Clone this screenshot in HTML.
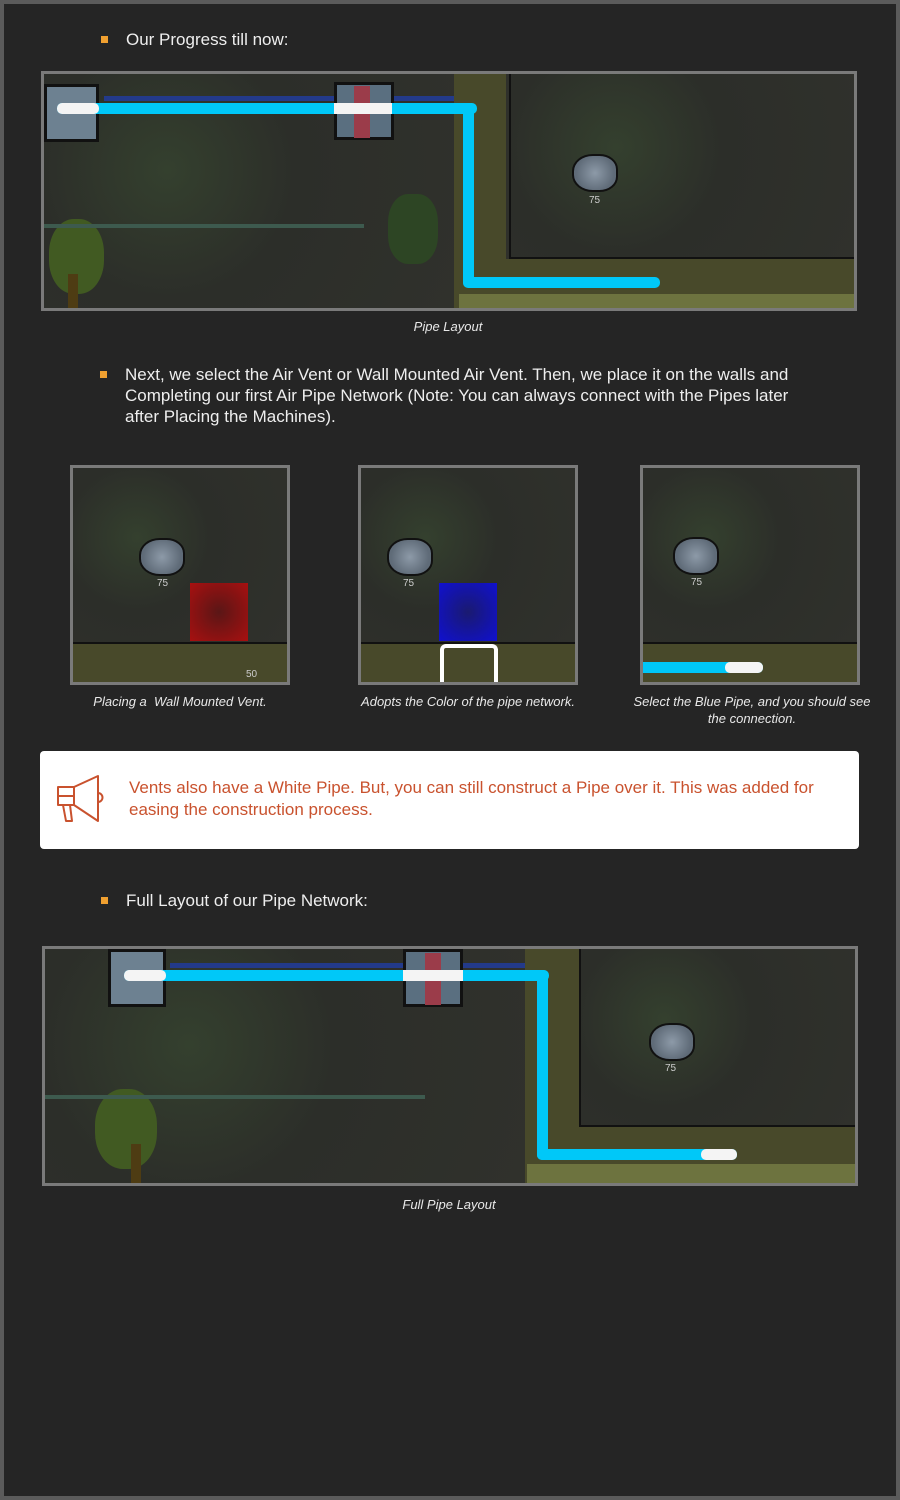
<!DOCTYPE html>
<html><head><meta charset="utf-8"><style>
*{margin:0;padding:0;box-sizing:border-box}
html,body{width:900px;height:1500px;background:#5b5b5b;overflow:hidden}
#page{position:absolute;left:4px;top:4px;width:892px;height:1492px;background:#252525}
.abs{position:absolute}
.t{position:absolute;color:#eeeeee;font-family:"Liberation Sans",sans-serif;font-size:17px;line-height:21px}
.b{position:absolute;width:7px;height:7px;background:#f0a030}
.cap{position:absolute;color:#e8e8e8;font-family:"Liberation Sans",sans-serif;font-size:13px;font-style:italic;text-align:center;line-height:17px}
.img{position:absolute;border:3px solid #7a7a7a;background:#2f302b;overflow:hidden}
.g{position:absolute;background:radial-gradient(circle at 30% 40%,#34402e 0,#2c2e29 40%,#30312c 100%)}
.pipe{position:absolute;background:#00c8f8;border-radius:5px}
.wp{position:absolute;background:#f4f4f4;border-radius:5px}
.rock{position:absolute;width:46px;height:38px;background:radial-gradient(circle,#8d9aa8 0,#5f6b78 70%);border:2px solid #111;border-radius:45% 40% 40% 45%}
.n{position:absolute;color:#ccc;font-family:"Liberation Sans",sans-serif;font-size:10px}
</style></head><body><div id="page"></div>

<div class="b" style="left:101px;top:36px"></div>
<div class="t" style="left:126px;top:29px">Our Progress till now:</div>

<div class="img" style="left:41px;top:71px;width:816px;height:240px">
  <div class="g" style="left:0;top:0;width:410px;height:240px"></div>
  <div class="abs" style="left:410px;top:0;width:52px;height:240px;background:#48492a"></div>
  <div class="abs" style="left:410px;top:185px;width:403px;height:55px;background:#48492a"></div>
  <div class="abs" style="left:415px;top:220px;width:400px;height:20px;background:#6d733f"></div>
  <div class="g" style="left:465px;top:0;width:350px;height:185px;border:2px solid #111;border-top:none;border-right:none"></div>
  <div class="abs" style="left:0;top:10px;width:55px;height:58px;background:#6d8191;border:3px solid #111"></div>
  <div class="abs" style="left:60px;top:22px;width:350px;height:5px;background:#233a8a"></div>
  <div class="abs" style="left:290px;top:8px;width:60px;height:58px;background:#5a6f80;border:3px solid #111"></div>
  <div class="abs" style="left:310px;top:12px;width:16px;height:52px;background:#9b3c4a"></div>
  <div class="abs" style="left:344px;top:120px;width:50px;height:70px;border-radius:40%;background:#2d4524"></div>
  <div class="abs" style="left:5px;top:145px;width:55px;height:75px;border-radius:45%;background:#415a22"></div>
  <div class="abs" style="left:24px;top:200px;width:10px;height:40px;background:#4e3c13"></div>
  <div class="abs" style="left:0;top:150px;width:320px;height:4px;background:#3d5a4e"></div>
  <div class="pipe" style="left:13px;top:29px;width:420px;height:11px"></div>
  <div class="pipe" style="left:419px;top:29px;width:11px;height:184px"></div>
  <div class="pipe" style="left:419px;top:203px;width:197px;height:11px"></div>
  <div class="wp" style="left:13px;top:29px;width:42px;height:11px"></div>
  <div class="wp" style="left:290px;top:29px;width:58px;height:11px;border-radius:0"></div>
  <div class="rock" style="left:528px;top:80px"></div>
  <div class="n" style="left:545px;top:121px">75</div>
</div>
<div class="cap" style="left:300px;top:318px;width:296px">Pipe Layout</div>

<div class="b" style="left:100px;top:371px"></div>
<div class="t" style="left:125px;top:364px;width:680px">Next, we select the Air Vent or Wall Mounted Air Vent. Then, we place it on the walls and Completing our first Air Pipe Network (Note: You can always connect with the Pipes later after Placing the Machines).</div>

<div class="img" style="left:70px;top:465px;width:220px;height:220px">
  <div class="g" style="left:0;top:0;width:214px;height:174px"></div>
  <div class="abs" style="left:0;top:174px;width:214px;height:2px;background:#111"></div>
  <div class="abs" style="left:0;top:176px;width:214px;height:38px;background:#48492a"></div>
  <div class="rock" style="left:66px;top:70px"></div><div class="n" style="left:84px;top:110px">75</div>
  <div class="abs" style="left:117px;top:115px;width:58px;height:58px;background:radial-gradient(circle,#5a1616,#a81010)"></div>
  <div class="n" style="left:173px;top:201px">50</div>
</div>
<div class="img" style="left:358px;top:465px;width:220px;height:220px">
  <div class="g" style="left:0;top:0;width:214px;height:174px"></div>
  <div class="abs" style="left:0;top:174px;width:214px;height:2px;background:#111"></div>
  <div class="abs" style="left:0;top:176px;width:214px;height:38px;background:#48492a"></div>
  <div class="rock" style="left:26px;top:70px"></div><div class="n" style="left:42px;top:110px">75</div>
  <div class="abs" style="left:78px;top:115px;width:58px;height:58px;background:radial-gradient(circle,#1a1a70,#1010d0)"></div>
  <div class="abs" style="left:79px;top:176px;width:58px;height:40px;border:4px solid #fff;border-bottom:none;border-radius:6px 6px 0 0"></div>
</div>
<div class="img" style="left:640px;top:465px;width:220px;height:220px">
  <div class="g" style="left:0;top:0;width:214px;height:174px"></div>
  <div class="abs" style="left:0;top:174px;width:214px;height:2px;background:#111"></div>
  <div class="abs" style="left:0;top:176px;width:214px;height:38px;background:#48492a"></div>
  <div class="rock" style="left:30px;top:69px"></div><div class="n" style="left:48px;top:109px">75</div>
  <div class="pipe" style="left:0;top:194px;width:120px;height:11px;border-radius:0 5px 5px 0"></div>
  <div class="wp" style="left:82px;top:194px;width:38px;height:11px"></div>
</div>
<div class="cap" style="left:70px;top:693px;width:220px">Placing a&nbsp; Wall Mounted Vent.</div>
<div class="cap" style="left:340px;top:693px;width:256px">Adopts the Color of the pipe network.</div>
<div class="cap" style="left:626px;top:693px;width:252px">Select the Blue Pipe, and you should see the connection.</div>

<div class="abs" style="left:40px;top:751px;width:819px;height:98px;background:#fff;border-radius:4px">
  <svg class="abs" style="left:14px;top:22px" width="52" height="54" viewBox="0 0 52 54" fill="none" stroke="#c9522e" stroke-width="2" stroke-linejoin="round">
    <path d="M4 14 H20 L44 3 V48 L20 32 H4 Z"/>
    <path d="M20 14 V32"/>
    <path d="M4 23 H20"/>
    <path d="M9 32 L12 48 H18 L16 32"/>
    <path d="M44 20 A4 4 0 0 1 44 29"/>
  </svg>
  <div class="abs" style="left:89px;top:26px;width:715px;color:#c9522e;font-family:'Liberation Sans',sans-serif;font-size:17px;line-height:22px">Vents also have a White Pipe. But, you can still construct a Pipe over it. This was added for easing the construction process.</div>
</div>

<div class="b" style="left:101px;top:897px"></div>
<div class="t" style="left:126px;top:890px">Full Layout of our Pipe Network:</div>

<div class="img" style="left:42px;top:946px;width:816px;height:240px">
  <div class="g" style="left:0;top:0;width:480px;height:240px"></div>
  <div class="abs" style="left:480px;top:0;width:56px;height:240px;background:#48492a"></div>
  <div class="abs" style="left:480px;top:178px;width:333px;height:62px;background:#48492a"></div>
  <div class="abs" style="left:482px;top:215px;width:331px;height:25px;background:#6d733f"></div>
  <div class="g" style="left:534px;top:0;width:280px;height:178px;border:2px solid #111;border-top:none;border-right:none"></div>
  <div class="abs" style="left:63px;top:0;width:58px;height:58px;background:#6d8191;border:3px solid #111"></div>
  <div class="abs" style="left:125px;top:14px;width:355px;height:5px;background:#233a8a"></div>
  <div class="abs" style="left:358px;top:0;width:60px;height:58px;background:#5a6f80;border:3px solid #111"></div>
  <div class="abs" style="left:380px;top:4px;width:16px;height:52px;background:#9b3c4a"></div>
  <div class="abs" style="left:50px;top:140px;width:62px;height:80px;border-radius:45%;background:#415a22"></div>
  <div class="abs" style="left:86px;top:195px;width:10px;height:45px;background:#4e3c13"></div>
  <div class="abs" style="left:0;top:146px;width:380px;height:4px;background:#3d5a4e"></div>
  <div class="pipe" style="left:79px;top:21px;width:425px;height:11px"></div>
  <div class="pipe" style="left:492px;top:21px;width:11px;height:190px"></div>
  <div class="pipe" style="left:492px;top:200px;width:200px;height:11px"></div>
  <div class="wp" style="left:656px;top:200px;width:36px;height:11px"></div>
  <div class="wp" style="left:79px;top:21px;width:42px;height:11px"></div>
  <div class="wp" style="left:358px;top:21px;width:60px;height:11px;border-radius:0"></div>
  <div class="rock" style="left:604px;top:74px"></div>
  <div class="n" style="left:620px;top:114px">75</div>
</div>
<div class="cap" style="left:300px;top:1196px;width:298px">Full Pipe Layout</div>
</body></html>
